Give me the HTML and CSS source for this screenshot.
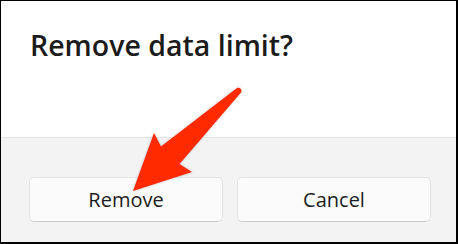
FILE: index.html
```html
<!DOCTYPE html>
<html lang="en">
<head>
<meta charset="utf-8">
<title>Remove data limit?</title>
<link rel="stylesheet" href="styles.css">
</head>
<body>
<div class="dialog">
  <div class="content">
    <h1 class="title">Remove data limit?</h1>
  </div>
  <div class="footer">
    <button class="btn" type="button">Remove</button>
    <button class="btn" type="button">Cancel</button>
  </div>
  <svg class="arrow" width="458" height="244" viewBox="0 0 458 244" aria-hidden="true">
    <path d="M133,191 L154,133 L161,146.5 L237,88 A3.2,3.2 0 0 1 241,92.5 L179.5,164 L192,172 Z" fill="#ff2a00"/>
  </svg>
</div>
</body>
</html>
```

FILE: styles.css
```css
html, body {
  margin: 0;
  padding: 0;
  background: #ffffff;
}

.dialog {
  position: relative;
  width: 458px;
  height: 244px;
  box-sizing: border-box;
  border-style: solid;
  border-color: #000000;
  border-width: 1px 2px 2px 1px;
  display: flex;
  flex-direction: column;
  background: #f3f3f3;
  font-family: "Open Sans", "Noto Sans", sans-serif;
  overflow: hidden;
}

.content {
  height: 137px;
  box-sizing: border-box;
  background: #ffffff;
  border-bottom: 1px solid #e5e5e5;
  padding: 26px 0 0 29px;
}

.title {
  margin: 0;
  font-size: 28.5px;
  line-height: 36px;
  font-weight: 600;
  color: #1b1b1b;
}

.footer {
  flex: 1;
  display: flex;
  gap: 14px;
  padding: 39px 25px 0 28px;
}

.btn {
  flex: 1;
  height: 45px;
  box-sizing: border-box;
  background: #fbfbfb;
  border: 1px solid #e3e3e3;
  border-bottom-color: #cccccc;
  border-radius: 5px;
  font-family: "Open Sans", "Noto Sans", sans-serif;
  font-size: 20px;
  color: #1b1b1b;
  padding: 0;
}

.arrow {
  position: absolute;
  left: -1px;
  top: -1px;
  filter: drop-shadow(0 0 1px rgba(0, 0, 0, 0.25));
}
```
